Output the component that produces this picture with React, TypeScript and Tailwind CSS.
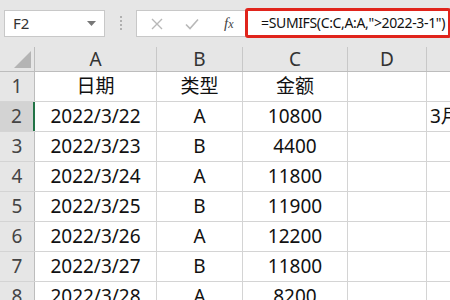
import React from "react";

const cols = [122, 86, 105, 79, 200];
const letters = ["A", "B", "C", "D", "E"];
const rows: string[][] = [
  ["日期", "类型", "金额", "", ""],
  ["2022/3/22", "A", "10800", "", "3月"],
  ["2022/3/23", "B", "4400", "", ""],
  ["2022/3/24", "A", "11800", "", ""],
  ["2022/3/25", "B", "11900", "", ""],
  ["2022/3/26", "A", "12200", "", ""],
  ["2022/3/27", "B", "11800", "", ""],
  ["2022/3/28", "A", "8200", "", ""],
];

const font = { fontFamily: '"Noto Sans", "Noto Sans CJK SC", sans-serif' };

export default function App() {
  return (
    <div className="w-[450px] h-[300px] overflow-hidden bg-white relative" style={font}>
      {/* toolbar */}
      <div className="h-[47px] bg-[#e6e6e6] flex items-start">
        <div className="ml-[4px] mt-[10px] w-[101px] h-[27px] bg-white border border-[#c8c8c8] flex items-center justify-between px-[8px]">
          <span className="text-[15px] text-[#333] leading-none">F2</span>
          <svg width="9" height="5" viewBox="0 0 9 5"><path d="M0 0 L9 0 L4.5 5 Z" fill="#777" /></svg>
        </div>
        <div className="w-[31px] h-[47px] flex items-center justify-center pb-[2px]">
          <div className="flex flex-col gap-[2px]">
            <div className="w-[2px] h-[2px] bg-[#b0b0b0]" />
            <div className="w-[2px] h-[2px] bg-[#b0b0b0]" />
            <div className="w-[2px] h-[2px] bg-[#b0b0b0]" />
            <div className="w-[2px] h-[2px] bg-[#b0b0b0]" />
          </div>
        </div>
        <div className="mt-[10px] h-[27px] flex-1 bg-white border border-[#c8c8c8] border-r-0 flex items-center relative">
          <svg className="ml-[14px]" width="12" height="12" viewBox="0 0 12 12">
            <path d="M1 1 L11 11 M11 1 L1 11" stroke="#b8b8b8" strokeWidth="1.4" />
          </svg>
          <svg className="ml-[22px]" width="14" height="12" viewBox="0 0 14 12">
            <path d="M1 6.5 L5 10.5 L13 1.5" stroke="#b8b8b8" strokeWidth="1.6" fill="none" />
          </svg>
          <span className="ml-[25px] text-[15px] italic text-[#444] leading-none" style={{ fontFamily: '"Liberation Serif", serif' }}>
            f<span className="text-[12px]">x</span>
          </span>
          <div className="absolute left-[108px] top-[-3px] w-[206px] h-[30px] border-[3px] border-[#e0241c] rounded-[3px] flex items-center pl-[13px]">
            <span className="text-[14px] text-[#111] leading-none whitespace-nowrap tracking-[-0.35px]">=SUMIFS(C:C,A:A,"&gt;2022-3-1")</span>
          </div>
        </div>
      </div>
      {/* header row */}
      <div className="flex h-[25px] bg-[#e6e6e6] border-b border-[#bdbdbd]">
        <div className="w-[35px] shrink-0 border-r border-[#bdbdbd] relative">
          <svg className="absolute right-[3px] bottom-[3px]" width="17" height="17" viewBox="0 0 17 17">
            <path d="M17 0 L17 17 L0 17 Z" fill="#b4b4b4" />
          </svg>
        </div>
        {cols.map((w, i) => (
          <div
            key={i}
            className="shrink-0 border-r border-[#c8c8c8] flex items-center justify-center text-[19px] text-[#333] leading-none"
            style={{ width: w }}
          >
            {letters[i]}
          </div>
        ))}
      </div>
      {rows.map((r, ri) => (
        <div key={ri} className="flex h-[30px] border-b border-[#d4d4d4]">
          <div
            className={
              "w-[35px] shrink-0 flex items-center justify-center text-[19px] text-[#444] leading-none " +
              (ri === 1 ? "bg-[#d3d3d3] border-r-2 border-[#217346]" : "bg-[#e6e6e6] border-r border-[#bdbdbd]")
            }
          >
            {ri + 1}
          </div>
          {cols.map((w, ci) => (
            <div
              key={ci}
              className={
                "shrink-0 border-r border-[#d4d4d4] flex items-center text-[19px] text-[#111] leading-none whitespace-nowrap overflow-hidden " +
                (ci === 4 ? "justify-start pl-[3px]" : "justify-center")
              }
              style={{ width: w }}
            >
              {r[ci]}
            </div>
          ))}
        </div>
      ))}
    </div>
  );
}
